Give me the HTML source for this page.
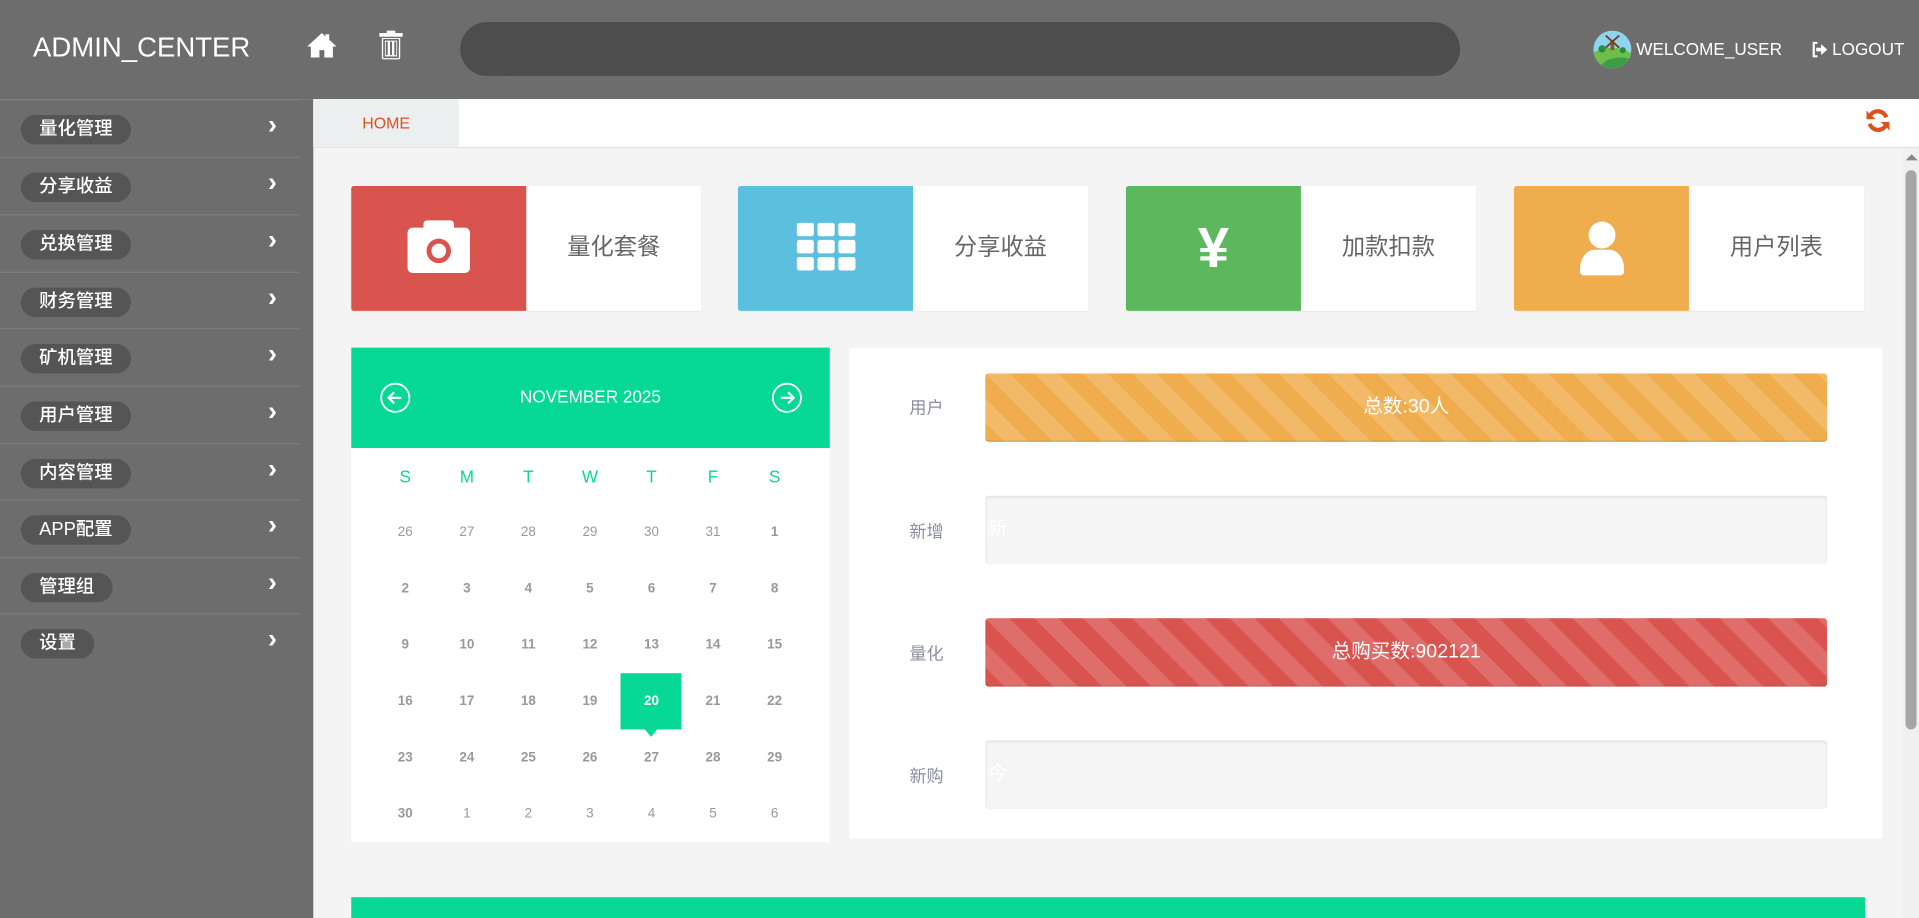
<!DOCTYPE html>
<html><head><meta charset="utf-8"><style>
*{margin:0;padding:0;box-sizing:border-box}
html,body{width:1919px;height:918px;overflow:hidden;background:#f4f4f4}
#w{position:absolute;left:0;top:0;width:1568px;height:750px;transform:scale(1.22385,1.224);transform-origin:0 0;font-family:"Liberation Sans","Noto Sans CJK SC",sans-serif;background:#f4f4f4}
.a{position:absolute}
.hdr{left:0;top:0;width:1568px;height:81px;background:#6d6d6d}
.side{left:0;top:81px;width:256px;height:669px;background:#6d6d6d}
.item{position:absolute;left:0;width:245px;height:47px;border-top:1px solid #7d7d7d}
.pill{position:absolute;left:17px;top:12px;height:24px;border-radius:12px;background:#555;color:#fff;font-size:15px;line-height:24px;padding:0 15px;font-weight:500}
.chev{position:absolute;left:219px;top:7px;color:#fff;font-size:22px;font-weight:bold}
.card{position:absolute;top:152px;width:286px;height:102px;background:#fff;box-shadow:0 1px 1px rgba(0,0,0,.06)}
.card .ic{position:absolute;left:0;top:0;width:143px;height:102px;border-radius:2px 0 0 2px}
.card .t{position:absolute;left:143px;right:0;top:0;line-height:102px;text-align:center;font-size:19px;color:#666}
.cal td{width:50.3px;height:46px;text-align:center;font-size:11px;color:#999;font-weight:bold}
.bar{position:absolute;left:805px;width:688px;height:56px;border-radius:3px;color:#fff;font-size:16px;line-height:56px;text-align:center}
.str{background-image:linear-gradient(45deg,rgba(255,255,255,.15) 25%,transparent 25%,transparent 50%,rgba(255,255,255,.15) 50%,rgba(255,255,255,.15) 75%,transparent 75%,transparent);background-size:40px 40px}
.lab{position:absolute;left:743px;font-size:14px;color:#8a8fa0}
.emp{background:#f5f5f5;box-shadow:inset 0 1px 2px rgba(0,0,0,.1);text-align:left;padding-left:2px}
</style></head><body><div id="w">
<div class="a hdr"></div>
<div class="a" style="left:27px;top:26px;color:#fff;font-size:22.5px">ADMIN_CENTER</div>
<svg class="a" style="left:250px;top:26px" width="26" height="22" viewBox="0 0 26 22"><path d="M13 1L1 12h3v9h7v-6h4v6h7v-9h3L19 6.5V2h-3v1.7z" fill="#fff"/></svg>
<svg class="a" style="left:309px;top:24px" width="21" height="25" viewBox="0 0 21 25"><path d="M7 1h7v2h6v3H1V3h6z M3 7h15v16a1.5 1.5 0 0 1-1.5 1.5h-12A1.5 1.5 0 0 1 3 23z" fill="#fff"/><path d="M7 10v11M10.5 10v11M14 10v11" stroke="#6d6d6d" stroke-width="1.6"/><rect x="4.8" y="8.5" width="11.4" height="14.3" fill="none" stroke="#6d6d6d" stroke-width="1.4"/></svg>
<div class="a" style="left:376px;top:18px;width:817px;height:44px;border-radius:22px;background:#4d4d4d"></div>
<svg class="a" style="left:1302px;top:25px" width="31" height="31" viewBox="0 0 31 31"><defs><clipPath id="c"><circle cx="15.5" cy="15.5" r="15.5"/></clipPath></defs><g clip-path="url(#c)"><rect width="31" height="31" fill="#8fd3ee"/><ellipse cx="15" cy="26" rx="20" ry="12" fill="#6bbf4a"/><ellipse cx="22" cy="31" rx="16" ry="9" fill="#3e9c45"/><rect x="14" y="8" width="3" height="8" fill="#8b5a2b"/><path d="M10 4l11 10M21 4L10 14" stroke="#6b3d1c" stroke-width="1.5"/><circle cx="7" cy="15" r="3" fill="#2e8b3e"/><circle cx="24" cy="16" r="2.5" fill="#2e8b3e"/></g></svg>
<div class="a" style="left:1337px;top:32px;color:#fff;font-size:14px">WELCOME_USER</div>
<svg class="a" style="left:1480px;top:34px" width="14" height="13" viewBox="0 0 14 13"><path d="M5 1H2v11h3" fill="none" stroke="#fff" stroke-width="1.8"/><path d="M4 5h4V2l5 4.5L8 11V8H4z" fill="#fff"/></svg>
<div class="a" style="left:1497px;top:32px;color:#fff;font-size:14px">LOGOUT</div>
<div class="a side"></div>
<div class="a" style="left:0;top:81px">
<div class="item" style="top:0"><span class="pill">量化管理</span><span class="chev">&#x203A;</span></div>
<div class="item" style="top:47px"><span class="pill">分享收益</span><span class="chev">&#x203A;</span></div>
<div class="item" style="top:94px"><span class="pill">兑换管理</span><span class="chev">&#x203A;</span></div>
<div class="item" style="top:141px"><span class="pill">财务管理</span><span class="chev">&#x203A;</span></div>
<div class="item" style="top:187px"><span class="pill">矿机管理</span><span class="chev">&#x203A;</span></div>
<div class="item" style="top:234px"><span class="pill">用户管理</span><span class="chev">&#x203A;</span></div>
<div class="item" style="top:281px"><span class="pill">内容管理</span><span class="chev">&#x203A;</span></div>
<div class="item" style="top:327px"><span class="pill">APP配置</span><span class="chev">&#x203A;</span></div>
<div class="item" style="top:374px"><span class="pill">管理组</span><span class="chev">&#x203A;</span></div>
<div class="item" style="top:420px"><span class="pill">设置</span><span class="chev">&#x203A;</span></div>
</div>
<div class="a" style="left:256px;top:81px;width:1312px;height:40px;background:#fff;border-bottom:1px solid #e2e2e2"></div>
<div class="a" style="left:256px;top:81px;width:119px;height:39px;background:#eceff0;color:#e0501c;font-size:13px;line-height:40px;text-align:center">HOME</div>
<svg class="a" style="left:1522px;top:86px" width="25" height="25" viewBox="0 0 24 24"><path d="M20 9A8.5 8.5 0 0 0 5 6.5L3 4v7h7L7.5 8.5A5.5 5.5 0 0 1 17 10z M4 15a8.5 8.5 0 0 0 15 2.5l2 2.5v-7h-7l2.5 2.5A5.5 5.5 0 0 1 7 14z" fill="#e0501c"/></svg>
<div class="a" style="left:1555px;top:121px;width:13px;height:629px;background:#f0f0f0"></div>
<div class="a" style="left:1557px;top:126px;width:0;height:0;border:5px solid transparent;border-bottom:5px solid #888;border-top:0"></div>
<div class="a" style="left:1557px;top:139px;width:9px;height:457px;border-radius:5px;background:#a6a6a6"></div>
<div class="card" style="left:287px"><div class="ic" style="background:#d9534f"><svg style="position:absolute;left:45px;top:26px" width="53" height="46" viewBox="0 0 53 46"><path d="M17 2h19a3 3 0 0 1 3 3v3h9a4 4 0 0 1 4 4v29a4 4 0 0 1-4 4H5a4 4 0 0 1-4-4V12a4 4 0 0 1 4-4h9V5a3 3 0 0 1 3-3z" fill="#fff"/><circle cx="26.5" cy="27" r="10" fill="#d9534f"/><circle cx="26.5" cy="27" r="6" fill="#fff"/></svg></div><div class="t">量化套餐</div></div>
<div class="card" style="left:603px"><div class="ic" style="background:#5bc0de"><svg style="position:absolute;left:48px;top:30px" width="48" height="40" viewBox="0 0 48 40"><g fill="#fff"><rect x="0" y="0" width="14" height="11" rx="2"/><rect x="17" y="0" width="14" height="11" rx="2"/><rect x="34" y="0" width="14" height="11" rx="2"/><rect x="0" y="14" width="14" height="11" rx="2"/><rect x="17" y="14" width="14" height="11" rx="2"/><rect x="34" y="14" width="14" height="11" rx="2"/><rect x="0" y="28" width="14" height="11" rx="2"/><rect x="17" y="28" width="14" height="11" rx="2"/><rect x="34" y="28" width="14" height="11" rx="2"/></g></svg></div><div class="t">分享收益</div></div>
<div class="card" style="left:920px"><div class="ic" style="background:#5cb85c"><div style="position:absolute;left:0;width:143px;top:22px;text-align:center;color:#fff;font-size:46px;font-weight:bold;line-height:56px">¥</div></div><div class="t">加款扣款</div></div>
<div class="card" style="left:1237px"><div class="ic" style="background:#f0ad4e"><svg style="position:absolute;left:52px;top:28px" width="40" height="46" viewBox="0 0 40 46"><circle cx="20" cy="12" r="11" fill="#fff"/><path d="M2 40c0-10 6-16 12-16h12c6 0 12 6 12 16v2a3 3 0 0 1-3 3H5a3 3 0 0 1-3-3z" fill="#fff"/></svg></div><div class="t">用户列表</div></div>
<div class="a" style="left:287px;top:284px;width:391px;height:404px;background:#fff"></div>
<div class="a" style="left:287px;top:284px;width:391px;height:82px;background:#07d995"></div>
<div class="a" style="left:287px;top:316px;width:391px;text-align:center;color:#fff;font-size:14px">NOVEMBER 2025</div>
<svg class="a" style="left:310px;top:312px" width="26" height="26" viewBox="0 0 26 26"><circle cx="13" cy="13" r="11.5" fill="none" stroke="#fff" stroke-width="1.5"/><path d="M18 13H8M12 8.5L7.5 13l4.5 4.5" fill="none" stroke="#fff" stroke-width="1.8"/></svg>
<svg class="a" style="left:630px;top:312px" width="26" height="26" viewBox="0 0 26 26"><circle cx="13" cy="13" r="11.5" fill="none" stroke="#fff" stroke-width="1.5"/><path d="M8 13h10M14 8.5l4.5 4.5-4.5 4.5" fill="none" stroke="#fff" stroke-width="1.8"/></svg>
<table class="a cal" style="left:306px;top:366px;border-collapse:collapse">
<tr><td style="color:#07d995;font-weight:normal;font-size:14px;height:44px">S</td><td style="color:#07d995;font-weight:normal;font-size:14px">M</td><td style="color:#07d995;font-weight:normal;font-size:14px">T</td><td style="color:#07d995;font-weight:normal;font-size:14px">W</td><td style="color:#07d995;font-weight:normal;font-size:14px">T</td><td style="color:#07d995;font-weight:normal;font-size:14px">F</td><td style="color:#07d995;font-weight:normal;font-size:14px">S</td></tr>
<tr><td style="font-weight:normal">26</td><td style="font-weight:normal">27</td><td style="font-weight:normal">28</td><td style="font-weight:normal">29</td><td style="font-weight:normal">30</td><td style="font-weight:normal">31</td><td>1</td></tr>
<tr><td>2</td><td>3</td><td>4</td><td>5</td><td>6</td><td>7</td><td>8</td></tr>
<tr><td>9</td><td>10</td><td>11</td><td>12</td><td>13</td><td>14</td><td>15</td></tr>
<tr><td>16</td><td>17</td><td>18</td><td>19</td><td style="background:#07d995;color:#fff;position:relative">20<span style="position:absolute;left:20px;bottom:-6px;border:5px solid transparent;border-top:6px solid #07d995;border-bottom:0"></span></td><td>21</td><td>22</td></tr>
<tr><td>23</td><td>24</td><td>25</td><td>26</td><td>27</td><td>28</td><td>29</td></tr>
<tr><td>30</td><td style="font-weight:normal">1</td><td style="font-weight:normal">2</td><td style="font-weight:normal">3</td><td style="font-weight:normal">4</td><td style="font-weight:normal">5</td><td style="font-weight:normal">6</td></tr>
</table>
<div class="a" style="left:694px;top:284px;width:844px;height:401px;background:#fff"></div>
<div class="lab" style="top:323px">用户</div>
<div class="bar str" style="top:305px;background-color:#f0ad4e;box-shadow:inset 0 -1px 0 rgba(0,0,0,.15)">总数:30人</div>
<div class="lab" style="top:424px">新增</div>
<div class="bar emp" style="top:405px">新</div>
<div class="lab" style="top:524px">量化</div>
<div class="bar str" style="top:505px;background-color:#d9534f;box-shadow:inset 0 -1px 0 rgba(0,0,0,.15)">总购买数:902121</div>
<div class="lab" style="top:624px">新购</div>
<div class="bar emp" style="top:605px">今</div>
<div class="a" style="left:287px;top:733px;width:1237px;height:17px;background:#07d995"></div>
</div></body></html>
